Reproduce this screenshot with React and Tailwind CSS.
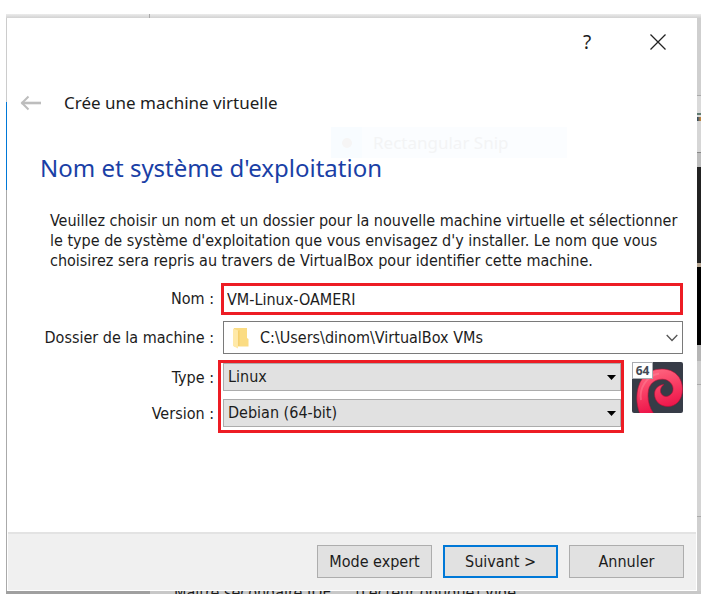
import React from "react";

const label = "w-[207px] shrink-0 text-right";
const select =
  "block h-7 w-full appearance-none rounded-none border border-[#acacac] bg-[#e1e1e1] pl-1 pr-6 leading-6 outline-none";
const button = "h-[33px] w-[115px] bg-[#e1e1e1]";

function BackIcon() {
  return (
    <svg width="22" height="16" viewBox="0 0 22 16" fill="none" stroke="#bdbdbd">
      <path d="M1.5 8H21" strokeWidth="2.6" />
      <path d="M8.500 1.500L2 8l6.500 6.500" strokeWidth="2" />
    </svg>
  );
}

function CloseIcon() {
  return (
    <svg width="18" height="18" viewBox="0 0 18 18" fill="none" stroke="#222" strokeWidth="1.300">
      <path d="M1.500 1.500l15 15M16.500 1.500l-15 15" />
    </svg>
  );
}

function FolderIcon() {
  return (
    <svg width="16" height="22" viewBox="0 0 16 22">
      <path d="M1 1h13v10l1.500 1v7.500H1z" fill="#fbdc83" />
      <path d="M0 1.500l5 2V21.500L0 19z" fill="#ffe9a8" />
      <path d="M5 4v15h1.500V3z" fill="#f5d06f" />
    </svg>
  );
}

function DebianIcon() {
  return (
    <svg width="51" height="51" viewBox="0 0 51 51" role="img" aria-label="Debian 64">
      <defs>
        <linearGradient id="swirl" x1="0" y1="0" x2="0.300" y2="1">
          <stop offset="0" stopColor="#ff7087" />
          <stop offset="0.450" stopColor="#fa4569" />
          <stop offset="1" stopColor="#ec1248" />
        </linearGradient>
        <clipPath id="tile">
          <rect width="51" height="51" rx="2" />
        </clipPath>
      </defs>
      <g clipPath="url(#tile)">
        <rect width="51" height="51" fill="#373c47" />
        <path
          d="M8 52C3 40 4 26 10 17C15 10 22 7 30 7C43 7 50.500 16 50.500 27C50.500 38 44 44.500 36 44.500C28 44.500 22.500 39 22.500 32C22.500 27 26 23 32 22.500C28.500 25 27.500 29 29.500 32C32 36 38 35 40.500 30C42.500 25 39 19 33 17.500C26 16 18 20 16.500 28C15 37 17 45 22 52Z"
          fill="url(#swirl)"
          stroke="#b80d35"
          strokeWidth="0.600"
        />
        <path d="M9 38C7 27 14 14 27 11.500" fill="none" stroke="#ff9aaa" strokeWidth="2" opacity="0.350" />
      </g>
      <rect x="0.500" y="0.500" width="20" height="16" fill="#fff" stroke="#a9abb0" />
      <text x="10.500" y="13" textAnchor="middle" fontSize="12" fontWeight="700" fill="#444a55" fontFamily="Open Sans, sans-serif">64</text>
    </svg>
  );
}

function RightBackdrop() {
  return (
    <div className="flex w-1 shrink-0 flex-col bg-[#cfcfcf]">
      <div className="h-[78px] border-b border-[#aaa]" />
      <div className="h-[17px] bg-[#dadada]" />
      <div className="h-[2px] bg-[#5f7a70]" />
      <div className="h-[2px] bg-[#dadada]" />
      <div className="h-1 bg-gradient-to-r from-[#1d4560] to-[#d08a30]" />
      <div className="h-8 border-b border-[#888] bg-[#d6d6d6]" />
      <div className="h-[14px] bg-[#bdbdbd]" />
      <div className="h-[96px] bg-[#222]" />
      <div className="h-1 bg-[#b8a894]" />
      <div className="h-[78px] bg-black" />
      <div className="h-4 bg-[#b5b5b5]" />
      <div className="h-6 border-b border-[#aaa] bg-[#cdcdcd]" />
      <div className="h-[132px] border-b border-[#aaa] bg-[#d4d4d4]" />
    </div>
  );
}

export default function App() {
  return (
    <div className="bg-white pt-[14px] pr-[7px] pb-2 pl-[6px] font-['DejaVu_Sans_Condensed','DejaVu_Sans',sans-serif] text-base leading-5 text-[#1c1c1c]">
      <div className="bg-[#c4c4c4]">
        <div className="flex h-1 bg-gradient-to-b from-[#ececec] to-[#d2d2d2]">
          <div className="w-36 border-r border-[#aaa]" />
        </div>
        <div className="flex">
          <div className="flex w-px shrink-0 flex-col bg-[#aaa]">
            <div className="h-[84px] bg-[#ccc]" />
            <div className="h-[88px] bg-[#0078d7]" />
          </div>

          <main className="relative min-w-0 flex-1 bg-white">
            <div className="flex h-12 items-center justify-end gap-[52px] pr-[30px] font-['Noto_Sans',sans-serif]">
              <button type="button" aria-label="Aide" className="w-5 text-[19px]">?</button>
              <button type="button" aria-label="Fermer"><CloseIcon /></button>
            </div>

            <div className="flex h-[74px] items-center gap-[22px] pl-[13px] font-['Noto_Sans',sans-serif] text-[17px]">
              <button type="button" aria-label="Retour"><BackIcon /></button>
              <span>Crée une machine virtuelle</span>
            </div>

            <div aria-hidden="true" className="absolute left-[324px] top-[109px] flex h-[31px] w-[236px] items-center bg-[#fbfdff] font-['Noto_Sans',sans-serif] text-[17px] text-[#f3f4f5]">
              <span className="flex h-full w-[31px] items-center justify-center bg-[#f8fcff]">
                <span className="size-[10px] rounded-full bg-[#f6f5f5]" />
              </span>
              <span className="pl-[11px]">Rectangular Snip</span>
            </div>

            <h1 className="relative pl-[33px] pt-3 font-['Noto_Sans',sans-serif] text-2xl leading-8 text-[#1a3fa6]">
              Nom et système d'exploitation
            </h1>

            <p className="pl-[43px] pr-3 pt-[27px]">
              Veuillez choisir un nom et un dossier pour la nouvelle machine virtuelle et sélectionner le type de système d'exploitation que vous envisagez d'y installer. Le nom que vous choisirez sera repris au travers de VirtualBox pour identifier cette machine.
            </p>

            <form className="pb-[99px] pr-[14px] pt-3">
              <div className="flex items-center gap-[7px]">
                <label htmlFor="nom" className={label}>Nom :</label>
                <input id="nom" defaultValue="VM-Linux-OAMERI" className="h-8 min-w-0 flex-1 rounded-none border-3 border-[#ed1c24] bg-white px-[3px] outline-none" />
              </div>
              <div className="flex items-center gap-[9px] pt-[6px]">
                <label htmlFor="dossier" className={label}>Dossier de la machine :</label>
                <div className="relative min-w-0 flex-1">
                  <select id="dossier" className="block h-[33px] w-full appearance-none rounded-none border border-[#7a7a7a] bg-white pl-9 pr-7 outline-none">
                    <option>C:\Users\dinom\VirtualBox VMs</option>
                  </select>
                  <span className="pointer-events-none absolute inset-y-0 left-[10px] flex items-center"><FolderIcon /></span>
                  <svg className="pointer-events-none absolute right-[5px] top-[13px]" width="12" height="8" viewBox="0 0 12 8" fill="none" stroke="#555" strokeWidth="1.300">
                    <path d="M0.700 1L6 6.500L11.300 1" />
                  </svg>
                </div>
              </div>
              <div className="flex gap-1 pt-[6px]">
                <div className="flex flex-col pt-1">
                  <label htmlFor="type" className={label + " leading-7"}>Type :</label>
                  <label htmlFor="version" className={label + " pt-2 leading-7"}>Version :</label>
                </div>
                <div className="flex min-w-0 flex-1 flex-col gap-2 border-3 border-[#ed1c24] pb-[3px] pl-[2px]">
                  <div className="relative">
                    <select id="type" className={select}><option>Linux</option></select>
                    <svg className="pointer-events-none absolute right-[5px] top-3" width="9" height="5" viewBox="0 0 9 5"><path d="M0 0h9L4.500 5z" /></svg>
                  </div>
                  <div className="relative">
                    <select id="version" className={select}><option>Debian (64-bit)</option></select>
                    <svg className="pointer-events-none absolute right-[5px] top-3" width="9" height="5" viewBox="0 0 9 5"><path d="M0 0h9L4.500 5z" /></svg>
                  </div>
                </div>
                <div className="ml-1 pt-[2px]"><DebianIcon /></div>
              </div>
            </form>

            <footer className="mx-px mb-px flex justify-end gap-[11px] border-t-2 border-[#e3e3e3] bg-[#f0f0f0] pb-3 pr-3 pt-[11px]">
              <button type="button" className={button + " border border-[#adadad]"}>Mode expert</button>
              <button type="button" className={button + " border-2 border-[#0078d7]"}>Suivant &gt;</button>
              <button type="button" className={button + " border border-[#adadad]"}>Annuler</button>
            </footer>
          </main>

          <RightBackdrop />
        </div>
        <div className="flex h-[3px] overflow-hidden bg-[#c8c8c8]">
          <div className="h-full w-36 shrink-0 bg-[#a0a0a0]" />
          <div className="-mt-2 flex gap-6 whitespace-nowrap pl-6">
            <span>Maître secondaire IDE</span>
            <span>[Lecteur optique] Vide</span>
          </div>
        </div>
      </div>
    </div>
  );
}
